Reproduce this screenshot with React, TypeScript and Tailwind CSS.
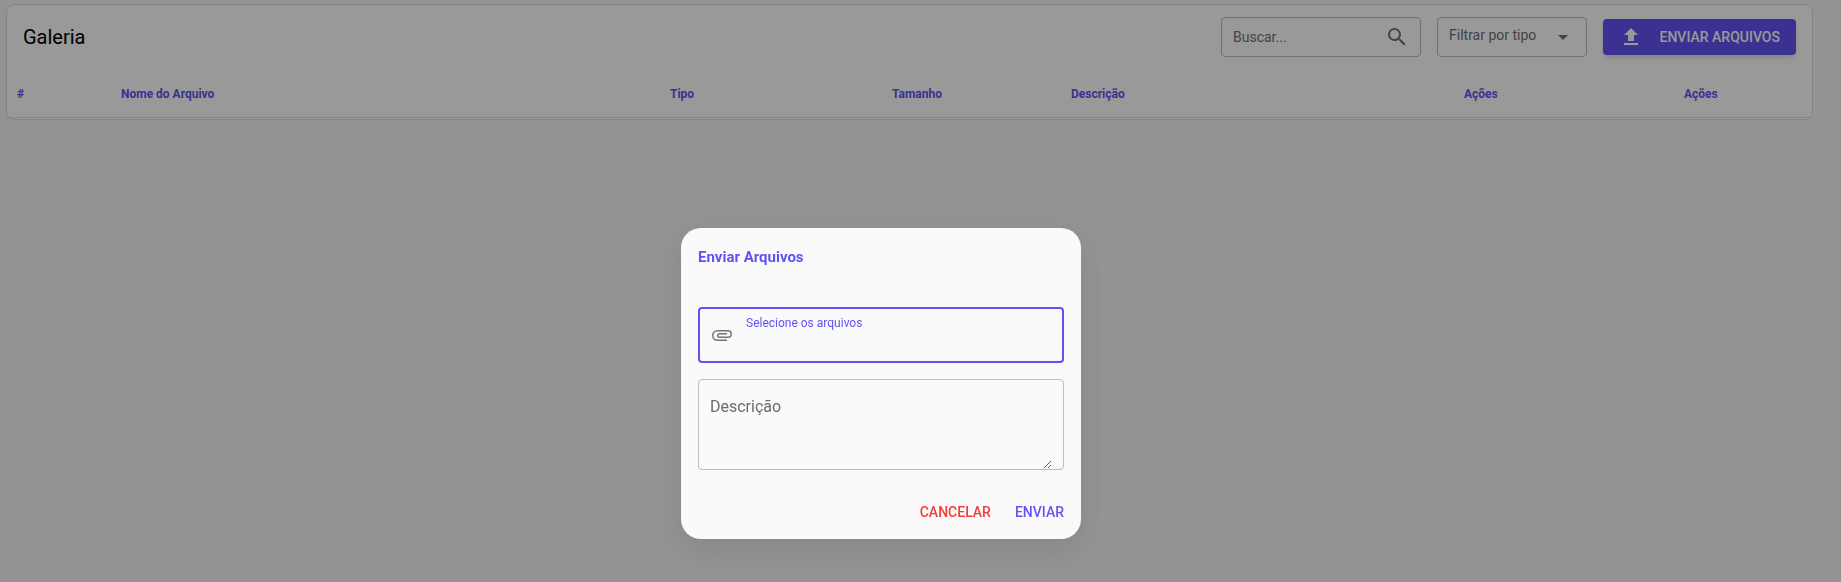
import React from "react";

const columns = [
  { label: "#", width: "w-[104px]" },
  { label: "Nome do Arquivo", width: "w-[549px]" },
  { label: "Tipo", width: "w-[222px]" },
  { label: "Tamanho", width: "w-[179px]" },
  { label: "Descrição", width: "w-[393px]" },
  { label: "Ações", width: "w-[220px]" },
  { label: "Ações", width: "w-[138px]" },
];

function Icon({ path, className }: { path: string; className: string }) {
  return (
    <svg viewBox="0 0 24 24" fill="currentColor" aria-hidden="true" className={className}>
      <path d={path} />
    </svg>
  );
}

const magnify =
  "M9.5,3A6.5,6.5 0 0,1 16,9.5C16,11.11 15.41,12.59 14.44,13.73L14.71,14H15.5L20.5,19L19,20.5L14,15.5V14.71L13.73,14.44C12.59,15.41 11.11,16 9.5,16A6.5,6.5 0 0,1 3,9.5A6.5,6.5 0 0,1 9.5,3M9.5,5C7,5 5,7 5,9.5C5,12 7,14 9.5,14C12,14 14,12 14,9.5C14,7 12,5 9.5,5Z";
const menuDown = "M7,10L12,15L17,10H7Z";
const upload = "M9,16V10H5L12,3L19,10H15V16H9M5,20V18H19V20H5Z";
const paperclip =
  "M7.5,18A5.5,5.5 0 0,1 2,12.5A5.5,5.5 0 0,1 7.5,7H18A4,4 0 0,1 22,11A4,4 0 0,1 18,15H9.5A2.5,2.5 0 0,1 7,12.5A2.5,2.5 0 0,1 9.5,10H17V11.5H9.5A1,1 0 0,0 8.5,12.5A1,1 0 0,0 9.5,13.5H18A2.5,2.5 0 0,0 20.5,11A2.5,2.5 0 0,0 18,8.5H7.5A4,4 0 0,0 3.5,12.5A4,4 0 0,0 7.5,16.5H17V18H7.5Z";

function Gallery() {
  return (
    <main className="pt-1 pr-7 pl-1.5">
      <section className="rounded-lg border border-[#dedede] bg-white">
        <header className="flex items-center gap-4 px-4 py-3">
          <h1 className="flex-1 text-xl">Galeria</h1>
          <label className="flex h-10 w-[200px] items-center rounded border border-[#bdbdbd] pr-[11px] pl-[11px] text-[#707070]">
            <input
              type="text"
              aria-label="Buscar"
              placeholder="Buscar..."
              className="min-w-0 flex-1 bg-transparent text-sm outline-none placeholder:text-[#707070]"
            />
            <Icon path={magnify} className="size-6" />
          </label>
          <div className="grid h-10 w-[150px] items-center rounded border border-[#bdbdbd] text-[#707070]">
            <select
              aria-label="Filtrar por tipo"
              className="col-start-1 row-start-1 h-full w-full appearance-none bg-transparent pb-1 pl-[11px] text-sm outline-none"
            >
              <option>Filtrar por tipo</option>
            </select>
            <Icon
              path={menuDown}
              className="pointer-events-none col-start-1 row-start-1 mr-[11px] size-6 justify-self-end"
            />
          </div>
          <button
            type="button"
            className="flex h-9 w-[193px] items-center justify-between rounded bg-[#6152f3] px-4 text-sm font-medium text-white uppercase shadow-md"
          >
            <Icon path={upload} className="size-6" />
            Enviar arquivos
          </button>
        </header>
        <table className="w-full table-fixed border-b border-[#dedede] text-left text-xs text-[#6152f3]">
          <colgroup>
            {columns.map((column, i) => (
              <col key={i} className={column.width} />
            ))}
          </colgroup>
          <thead>
            <tr className="h-12">
              {columns.map((column, i) => (
                <th key={i} scope="col" className="px-2.5 pt-0.5 font-bold">
                  {column.label}
                </th>
              ))}
            </tr>
          </thead>
        </table>
        <div className="h-px" />
      </section>
    </main>
  );
}

function UploadDialog() {
  return (
    <div className="fixed inset-0 flex items-start justify-center bg-black/40 pt-[228px] pr-[79px]">
      <form
        role="dialog"
        aria-labelledby="upload-title"
        className="flex w-[400px] flex-col rounded-[20px] bg-[#fafafa] px-[17px] pt-[17px] pb-[9px] shadow-[0_10px_36px_4px_rgba(0,0,0,0.09)]"
        onSubmit={(event) => event.preventDefault()}
      >
        <h2 id="upload-title" className="text-[15px] leading-6 font-bold text-[#6152f3]">
          Enviar Arquivos
        </h2>
        <label className="relative mt-[38px] flex h-14 cursor-pointer rounded border-2 border-[#6152f3]">
          <Icon path={paperclip} className="ml-2.5 size-6 self-center text-[#757575]" />
          <span className="mt-1 ml-3 text-xs leading-5 text-[#6152f3]">Selecione os arquivos</span>
          <input type="file" multiple className="absolute inset-0 cursor-pointer opacity-0" />
        </label>
        <div className="mt-4 flex rounded border border-[#bdbdbd] pr-[11px]">
          <textarea
            aria-label="Descrição"
            placeholder="Descrição"
            className="h-[89px] w-full resize bg-transparent pt-[15px] pl-[11px] text-base outline-none placeholder:text-[#6b6b6b]"
          />
        </div>
        <div className="mt-6 flex justify-end gap-6 text-sm font-medium">
          <button type="button" className="h-9 text-[#ef3e36] uppercase">
            Cancelar
          </button>
          <button type="submit" className="h-9 text-[#6152f3] uppercase">
            Enviar
          </button>
        </div>
      </form>
    </div>
  );
}

export default function App() {
  return (
    <div className="min-h-screen bg-[#f6f6f6] font-[Roboto,sans-serif] text-black">
      <Gallery />
      <UploadDialog />
    </div>
  );
}
